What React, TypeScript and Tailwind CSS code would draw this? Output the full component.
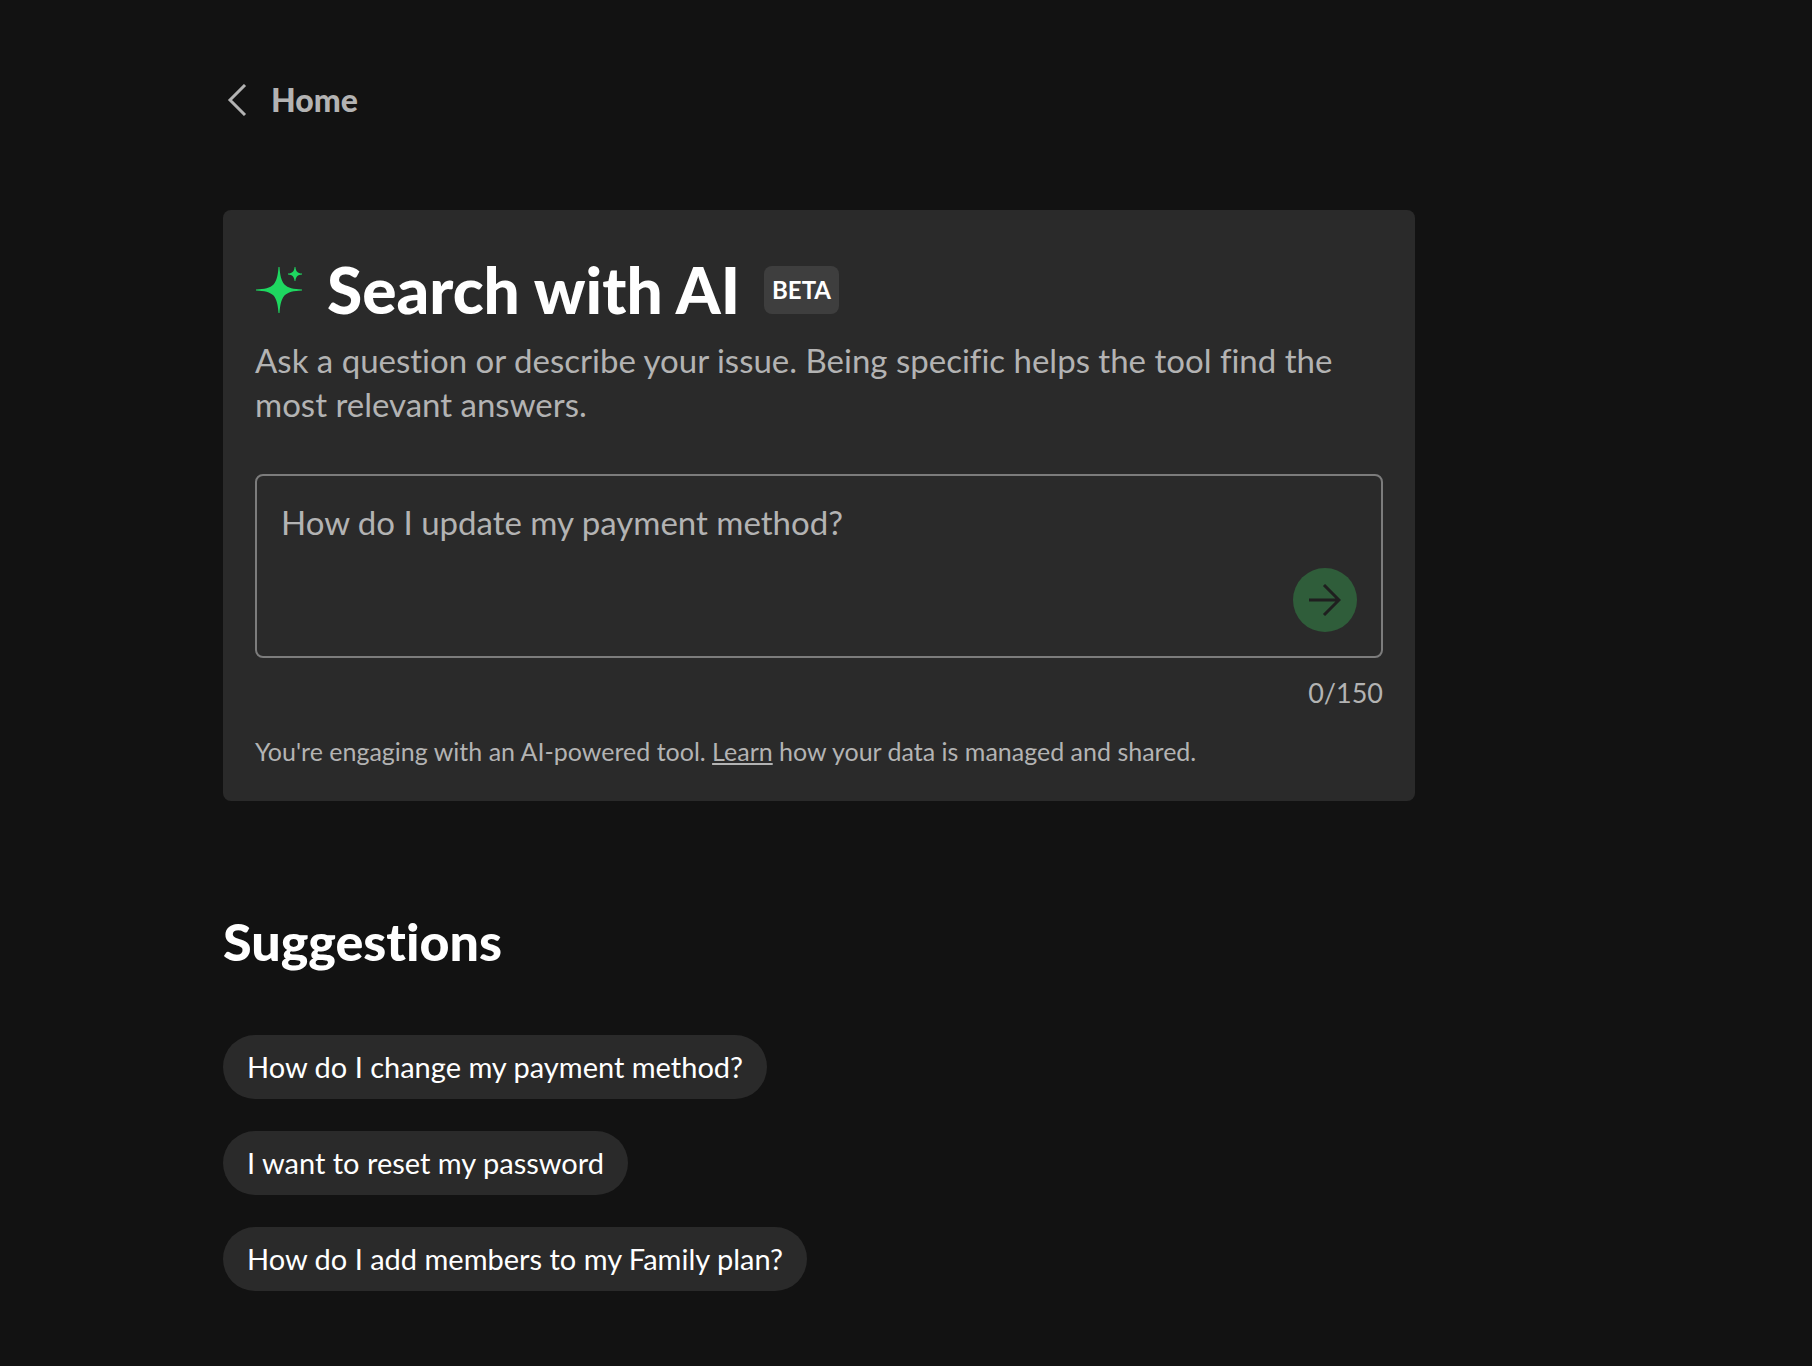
import { useState } from "react";

const suggestions = [
  "How do I change my payment method?",
  "I want to reset my password",
  "How do I add members to my Family plan?",
];

const LIMIT = 150;

function SparkleIcon() {
  return (
    <svg viewBox="0 0 48 48" className="size-12 shrink-0 fill-[#1ed760]" aria-hidden="true">
      <path d="M23.500 1H24.500C25 9 26.300 14.500 29.200 18.200C33 22 38.500 23.100 47 23.500V24.500C38.500 24.900 33 26 29.200 29.800C26.300 33.500 25 39 24.500 47H23.500C23 39 21.700 33.500 18.800 29.800C15 26 9.500 24.900 1 24.500V23.500C9.500 23.100 15 22 18.800 18.200C21.700 14.500 23 9 23.500 1Z" />
      <path d="M39.600 1H40.400C40.800 5.500 42.500 7.200 47 7.600V8.400C42.500 8.800 40.800 10.500 40.400 15H39.600C39.200 10.500 37.500 8.800 33 8.400V7.600C37.500 7.200 39.200 5.500 39.600 1Z" />
    </svg>
  );
}

export default function App() {
  const [question, setQuestion] = useState("");

  return (
    <main className="min-h-screen bg-[#121212] px-6 pt-18 pb-18 font-['Lato',sans-serif] text-[#b3b3b3] [font-variant-ligatures:none] lg:pr-[397px] lg:pl-[223px]">
      <nav>
        <a href="#home" className="inline-flex items-center gap-4 text-[32px] leading-14 font-black">
          <svg viewBox="0 0 32 32" className="size-8" fill="none" stroke="currentColor" strokeWidth="3" aria-hidden="true">
            <path d="M22 1L7 16L22 31" />
          </svg>
          Home
        </a>
      </nav>

      <section className="mt-[82px] rounded-lg bg-[#2a2a2a] px-8 pt-12 pb-8">
        <div className="flex items-center gap-6">
          <SparkleIcon />
          <h1 className="text-[64px] leading-16 font-black text-white">Search with AI</h1>
          <span className="rounded-lg bg-[#3e3e3e] px-2 text-2xl leading-12 font-bold text-white">BETA</span>
        </div>
        <p className="mt-4 text-[33px] leading-11">
          Ask a question or describe your issue. Being specific helps the tool find the most relevant answers.
        </p>

        <form className="mt-12" onSubmit={(e) => e.preventDefault()}>
          <div className="flex h-46 items-end rounded-lg border-2 border-[#7c7c7c] p-6">
            <textarea
              aria-label="Your question"
              maxLength={LIMIT}
              value={question}
              onChange={(e) => setQuestion(e.target.value)}
              placeholder="How do I update my payment method?"
              className="h-full min-w-0 flex-1 resize-none bg-transparent text-[33px] leading-11 outline-none placeholder:text-[#b3b3b3]"
            />
            <button type="submit" aria-label="Search" className="flex size-16 shrink-0 items-center justify-center rounded-full bg-[#2f5d3a] text-[#1f1f1f]">
              <svg viewBox="0 0 32 32" className="size-8" fill="none" stroke="currentColor" strokeWidth="3" aria-hidden="true">
                <path d="M0 16H30M15 1L30 16L15 31" />
              </svg>
            </button>
          </div>
          <p className="mt-[15px] text-right text-[27px] leading-10">{question.length}/{LIMIT}</p>
        </form>

        <p className="mt-5 text-[25px] leading-9">
          You're engaging with an AI-powered tool.{" "}
          <a href="#learn" className="underline">Learn</a> how your data is managed and shared.
        </p>
      </section>

      <section className="mt-27">
        <h2 className="text-[52px] leading-16 font-black text-white">Suggestions</h2>
        <ul className="mt-[62px] flex flex-col items-start gap-8">
          {suggestions.map((text) => (
            <li key={text}>
              <button type="button" onClick={() => setQuestion(text)} className="rounded-full bg-[#2a2a2a] px-6 text-left text-[29px] leading-16 text-white">
                {text}
              </button>
            </li>
          ))}
        </ul>
      </section>
    </main>
  );
}
